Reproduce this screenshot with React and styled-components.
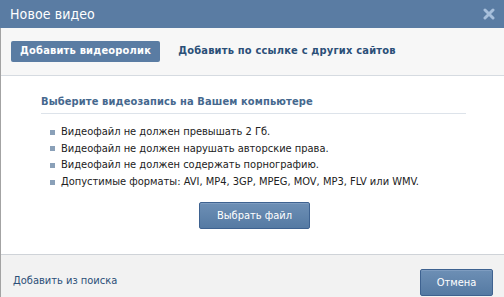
import React from "react"
import styled, { createGlobalStyle } from "styled-components"

const Global = createGlobalStyle`
  html, body {
    margin: 0;
    padding: 0;
    background: #ffffff;
  }
  body {
    font-family: "DejaVu Sans Condensed", "DejaVu Sans", Tahoma, sans-serif;
    font-size: 11px;
  }
`

const Box = styled.div`
  width: 504px;
  height: 297px;
  display: flex;
  flex-direction: column;
  overflow: hidden;
`

const Header = styled.div`
  height: 28px;
  background: #5a7ca3;
  display: flex;
  align-items: center;
  justify-content: space-between;
  padding: 0 9px 0 10px;
  flex-shrink: 0;
`

const Title = styled.div`
  color: #ffffff;
  font-size: 14px;
  letter-spacing: 0.1px;
`

const Body = styled.div`
  flex: 1;
  display: flex;
  flex-direction: column;
  border-left: 1px solid #a3a3a3;
`

const Tabs = styled.div`
  height: 47px;
  background: #f7f7f7;
  border-bottom: 1px solid #d6dbe1;
  display: flex;
  align-items: center;
  padding: 0 10px;
  gap: 18px;
  box-shadow: 0 1px 0 #eef0f3;
`

const Tab = styled.div`
  font-weight: bold;
  font-size: 11px;
  letter-spacing: 0.2px;
  color: ${(p) => (p.active ? "#ffffff" : "#2b4f78")};
  background: ${(p) => (p.active ? "#5a7ca3" : "transparent")};
  border-radius: 2px;
  padding: ${(p) => (p.active ? "4px 9px 5px" : "4px 0 5px")};
  line-height: 12px;
`

const Content = styled.div`
  flex: 1;
  background: #ffffff;
  padding: 19px 38px 0 40px;
  display: flex;
  flex-direction: column;
`

const Heading = styled.div`
  font-weight: bold;
  color: #45688e;
  font-size: 11px;
  letter-spacing: 0.12px;
  padding-bottom: 5px;
  border-bottom: 1px solid #dde3ea;
`

const Rules = styled.ul`
  list-style: none;
  margin: 10px 0 0;
  padding: 0 0 0 9px;
  display: flex;
  flex-direction: column;
`

const Rule = styled.li`
  display: flex;
  align-items: center;
  gap: 6px;
  line-height: 16.6px;
  color: #222222;

  &::before {
    content: "";
    width: 5px;
    height: 5px;
    background: #8aa0b8;
    flex-shrink: 0;
  }
`

const Center = styled.div`
  display: flex;
  justify-content: center;
  margin-top: 12px;
  padding-left: 2px;
`

const BlueButton = styled.div`
  display: flex;
  align-items: center;
  justify-content: center;
  width: ${(p) => p.w}px;
  height: 27px;
  color: #ffffff;
  font-size: 11px;
  border-radius: 2px;
  border: 1px solid #3e6290;
  background: linear-gradient(#6d8fb5, #557aa3);
  box-shadow: inset 0 1px 0 #7e9cc0;
  box-sizing: border-box;
`

const Footer = styled.div`
  height: 43px;
  flex-shrink: 0;
  background: #f2f2f2;
  border-top: 1px solid #cfd3d8;
  display: flex;
  align-items: center;
  justify-content: space-between;
  padding: 12px 11px 0 12px;
  box-sizing: border-box;
`

const Link = styled.div`
  color: #2b4f78;
  font-size: 11px;
  margin-top: -4px;
`

const Close = () => (
  <svg width="12" height="12" viewBox="0 0 12 12">
    <path d="M2 2 L10 10 M10 2 L2 10" stroke="#a7bfdb" strokeWidth="3" strokeLinecap="round" />
  </svg>
)

const rules = [
  "Видеофайл не должен превышать 2 Гб.",
  "Видеофайл не должен нарушать авторские права.",
  "Видеофайл не должен содержать порнографию.",
  "Допустимые форматы: AVI, MP4, 3GP, MPEG, MOV, MP3, FLV или WMV.",
]

export default function App() {
  return (
    <Box>
      <Global />
      <Header>
        <Title>Новое видео</Title>
        <Close />
      </Header>
      <Body>
        <Tabs>
          <Tab active>Добавить видеоролик</Tab>
          <Tab>Добавить по ссылке с других сайтов</Tab>
        </Tabs>
        <Content>
          <Heading>Выберите видеозапись на Вашем компьютере</Heading>
          <Rules>
            {rules.map((r) => (
              <Rule key={r}>{r}</Rule>
            ))}
          </Rules>
          <Center>
            <BlueButton w={111}>Выбрать файл</BlueButton>
          </Center>
        </Content>
        <Footer>
          <Link>Добавить из поиска</Link>
          <BlueButton w={73}>Отмена</BlueButton>
        </Footer>
      </Body>
    </Box>
  )
}
